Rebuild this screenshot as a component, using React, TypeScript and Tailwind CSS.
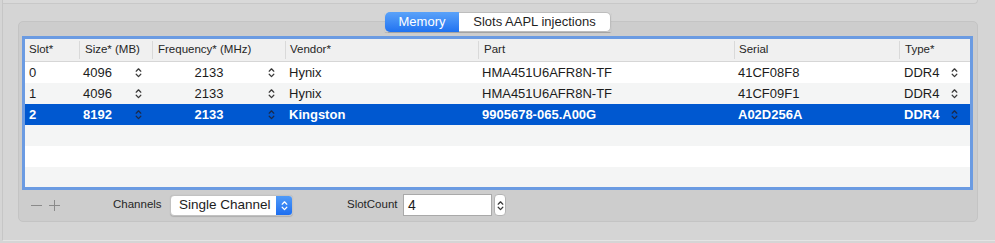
import React from "react";

const cols = "grid grid-cols-[54px_73px_133px_193px_256px_165px_70px]";

function Chevrons({ color = "#3a3a3a" }: { color?: string }) {
  return (
    <svg width="7" height="13" viewBox="0 0 7 13" fill="none" stroke={color} strokeWidth="1.25" strokeLinecap="round" strokeLinejoin="round">
      <path d="M1.2 5.2 L3.5 2.8 L5.8 5.2" />
      <path d="M1.2 8.2 L3.5 10.6 L5.8 8.2" />
    </svg>
  );
}

type Row = { slot: string; size: string; freq: string; vendor: string; part: string; serial: string; type: string };

const rows: Row[] = [
  { slot: "0", size: "4096", freq: "2133", vendor: "Hynix", part: "HMA451U6AFR8N-TF", serial: "41CF08F8", type: "DDR4" },
  { slot: "1", size: "4096", freq: "2133", vendor: "Hynix", part: "HMA451U6AFR8N-TF", serial: "41CF09F1", type: "DDR4" },
  { slot: "2", size: "8192", freq: "2133", vendor: "Kingston", part: "9905678-065.A00G", serial: "A02D256A", type: "DDR4" },
];

function HeaderCell({ label, first = false, pad = "pl-[4px]" }: { label: string; first?: boolean; pad?: string }) {
  return (
    <div className="flex h-full items-center">
      <div className={`flex h-[18px] items-center ${first ? "" : "border-l border-[#d9d9d9]"} ${pad} whitespace-nowrap`}>{label}</div>
    </div>
  );
}

function DataRow({ r, i }: { r: Row; i: number }) {
  const selected = i === 2;
  const bg = selected ? "bg-[#0058d0] text-white font-bold" : i % 2 === 0 ? "bg-white text-[#1c1c1c]" : "bg-[#f4f5f5] text-[#1c1c1c]";
  const chev = selected ? "#1b2a4a" : "#3a3a3a";
  return (
    <div className={`${cols} h-[21px] items-center text-[13px] ${bg}`}>
      <div className="pl-[4px]">{r.slot}</div>
      <div className="flex items-center justify-between pl-[4px] pr-[10px]">
        <span>{r.size}</span>
        <Chevrons color={chev} />
      </div>
      <div className="flex items-center">
        <span className="flex-1 text-center">{r.freq}</span>
        <span className="ml-[2px] mr-[10px] flex"><Chevrons color={chev} /></span>
      </div>
      <div className="pl-[4px]">{r.vendor}</div>
      <div className="pl-[4px] whitespace-nowrap">{r.part}</div>
      <div className="pl-[4px]">{r.serial}</div>
      <div className="flex items-center justify-between pl-[5px] pr-[11px]">
        <span>{r.type}</span>
        <Chevrons color={chev} />
      </div>
    </div>
  );
}

function EmptyRow({ i }: { i: number }) {
  return <div className={`h-[21px] ${i % 2 === 0 ? "bg-white" : "bg-[#f4f5f5]"}`} />;
}

export default function App() {
  return (
    <div className="h-[243px] w-[995px] overflow-hidden bg-[#d5d5d5] pl-[2px] font-['Liberation_Sans',Arial,sans-serif]">
      <div className="flex h-[241px] flex-col border-b border-l border-[#c6c6c6] border-b-[#e4e4e4]">
        {/* top strip: bottom of previous box */}
        <div className="h-[4px] w-[975px] rounded-br-[4px] border-b border-r border-[#c8c8c8] bg-[#d9d9d9]" />

        {/* tabs */}
        <div className="relative z-10 ml-[382px] mt-[8px] flex h-[20px] w-[226px] text-[13px] shadow-[0_0.5px_1px_rgba(0,0,0,0.2)]">
          <div className="flex w-[74px] items-center justify-center rounded-l-[5px] bg-gradient-to-b from-[#5aa2f9] to-[#1f72f1] text-white">
            Memory
          </div>
          <div className="flex flex-1 items-center justify-center rounded-r-[5px] border border-l-0 border-[#bdbdbd] bg-white text-[#1f1f1f]">
            Slots AAPL injections
          </div>
        </div>

        {/* group box */}
        <div className="-mt-[11px] ml-[15px] flex h-[201px] w-[960px] flex-col rounded-[5px] border border-[#c4c4c4] bg-[#cdcdcd] pl-[3px] pt-[14px]">
          {/* table */}
          <div className="h-[154px] w-[951px] overflow-hidden border-[3px] border-[#6b9be2] bg-white">
            <div className={`${cols} h-[23px] border-b border-[#d6d6d6] bg-[#f0f0f0] text-[11.5px] text-[#262626]`}>
              <HeaderCell label="Slot*" first />
              <HeaderCell label="Size* (MB)" pad="pl-[5px]" />
              <HeaderCell label="Frequency* (MHz)" pad="pl-[5px]" />
              <HeaderCell label="Vendor*" pad="pl-[4px]" />
              <HeaderCell label="Part" pad="pl-[5px]" />
              <HeaderCell label="Serial" pad="pl-[4px]" />
              <HeaderCell label="Type*" pad="pl-[5px]" />
            </div>
            {rows.map((r, i) => (
              <DataRow key={i} r={r} i={i} />
            ))}
            <EmptyRow i={3} />
            <EmptyRow i={4} />
            <EmptyRow i={5} />
          </div>

          {/* controls */}
          <div className="mt-[4px] flex h-[22px] items-center pl-[9px] text-[11.5px] text-[#262626]">
            <svg width="11" height="11" viewBox="0 0 11 11" stroke="#8a8a8a" strokeWidth="1">
              <path d="M0 5.5 H11" />
            </svg>
            <svg className="ml-[7px]" width="11" height="11" viewBox="0 0 11 11" stroke="#8a8a8a" strokeWidth="1">
              <path d="M0 5.5 H11" />
              <path d="M5.5 0 V11" />
            </svg>
            <div className="ml-[53px] w-[48px] whitespace-nowrap">Channels</div>
            <div className="ml-[9px] flex h-[21px] w-[123px] overflow-hidden rounded-[4px] border border-[#c2c2c2] bg-white shadow-[0_0.5px_1px_rgba(0,0,0,0.15)]">
              <div className="flex flex-1 items-center pl-[8px] text-[13.5px] text-[#1c1c1c] whitespace-nowrap">Single Channel</div>
              <div className="flex w-[16px] items-center justify-center bg-gradient-to-b from-[#4f9af8] to-[#1d6ef0]">
                <Chevrons color="#ffffff" />
              </div>
            </div>
            <div className="ml-[54px] w-[51px] whitespace-nowrap">SlotCount</div>
            <div className="ml-[5px] flex h-[22px] w-[89px] items-center border border-[#a9a9a9] bg-white pl-[4px] text-[14px] text-[#1c1c1c]">
              4
            </div>
            <div className="ml-[2px] flex h-[22px] w-[12px] items-center justify-center rounded-[4px] border border-[#b4b4b4] bg-white">
              <Chevrons color="#3a3a3a" />
            </div>
          </div>
        </div>
      </div>
    </div>
  );
}
